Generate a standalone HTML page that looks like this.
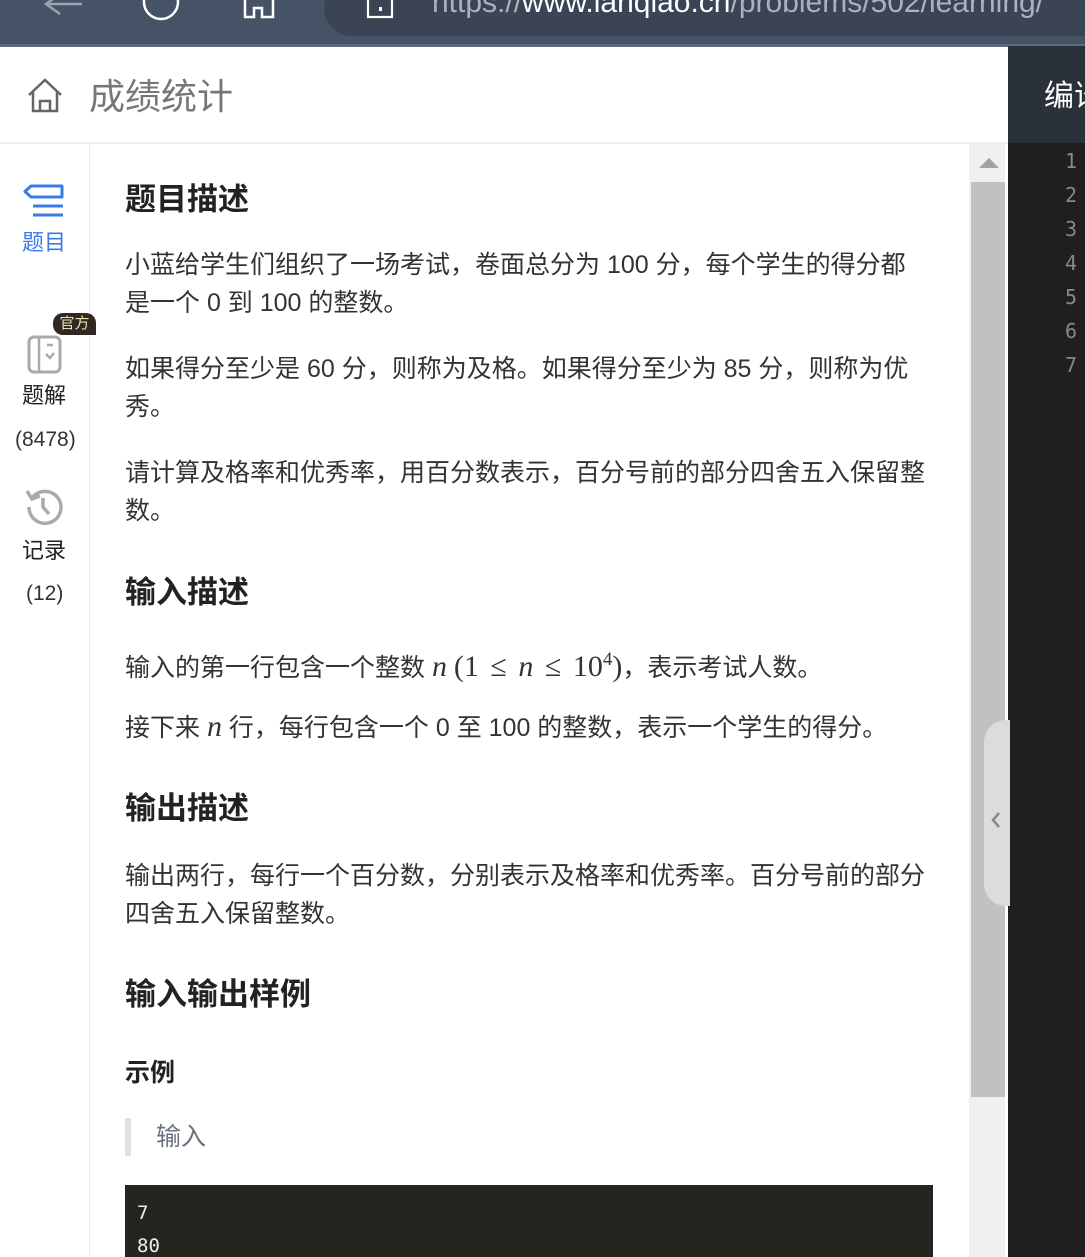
<!DOCTYPE html>
<html style="width:1085px;height:1257px;overflow:hidden"><head><meta charset="utf-8">
<style>
*{margin:0;padding:0;box-sizing:border-box}
body{width:1085px;height:1257px;overflow:hidden;background:#fff;position:relative;font-family:"Liberation Sans","Noto Sans CJK SC",sans-serif;color:#333}
.a{position:absolute;white-space:nowrap}
.p{position:absolute;left:125px;font-size:25px;line-height:38px;color:#333;white-space:nowrap}
.h{position:absolute;left:125px;font-size:31px;font-weight:bold;color:#222;line-height:40px}
.m{font-family:"Liberation Serif",serif;font-style:italic;font-size:30px}
.r{font-family:"Liberation Serif",serif;font-size:30px;word-spacing:4px}
</style></head><body>
<!-- browser bar -->
<div class="a" style="left:0;top:0;width:1085px;height:45px;background:#465366"></div>
<div class="a" style="left:324px;top:-20px;width:800px;height:56px;background:#3a4454;border-radius:28px"></div>
<div class="a" style="left:0;top:44px;width:1085px;height:3px;background:#5d6a7c"></div>
<div class="a" style="left:432px;top:-14px;font-size:30px;color:#aab2bd;line-height:34px">https://<span style="color:#fff">www.lanqiao.cn</span>/problems/502/learning/</div>
<svg class="a" style="left:40px;top:0" width="45" height="20"><path d="M42 4H8M20 -6L6 4L20 14" stroke="#9aa3ae" stroke-width="2.5" fill="none"/></svg>
<svg class="a" style="left:140px;top:0" width="40" height="22"><circle cx="21" cy="2" r="17" stroke="#fff" stroke-width="2.5" fill="none"/></svg>
<svg class="a" style="left:240px;top:0" width="40" height="22"><path d="M5 0V17H14V8H22V17H33V0" stroke="#fff" stroke-width="2.5" fill="none"/></svg>
<svg class="a" style="left:365px;top:0" width="30" height="22"><path d="M3 0V17H27V0" stroke="#fff" stroke-width="2.2" fill="none"/><rect x="14" y="7" width="3" height="4" fill="#fff"/></svg>
<!-- header -->
<div class="a" style="left:0;top:142px;width:1008px;height:2px;background:#eee"></div>
<svg class="a" style="left:26px;top:77px" width="38" height="38"><path d="M3 18L19 3L35 18M7 15V34H31V15M14 34V24H24V34" stroke="#666" stroke-width="2.5" fill="none"/></svg>
<div class="a" style="left:89px;top:74px;font-size:36px;color:#777;line-height:46px">成绩统计</div>
<!-- right editor -->
<div class="a" style="left:1008px;top:46px;width:77px;height:97px;background:#2a3138"></div>
<div class="a" style="left:1044px;top:78px;font-size:30px;color:#fff;line-height:38px">编译</div>
<div class="a" style="left:1008px;top:143px;width:77px;height:1114px;background:#1f1f1f"></div>
<div class="a" style="left:1055px;top:144px;font-family:'DejaVu Sans Mono',monospace;font-size:20px;color:#888;line-height:34px;text-align:right;width:22px;white-space:pre">1
2
3
4
5
6
7</div>
<!-- scrollbar -->
<div class="a" style="left:969px;top:144px;width:39px;height:1113px;background:#f0f0f0"></div>
<div class="a" style="left:1005px;top:144px;width:3px;height:1113px;background:#fff"></div>
<svg class="a" style="left:978px;top:157px" width="22" height="12"><path d="M1 11L11 1L21 11Z" fill="#a3a3a3"/></svg>
<div class="a" style="left:971px;top:182px;width:34px;height:915px;background:#c1c1c1"></div>
<div class="a" style="left:984px;top:720px;width:26px;height:186px;background:#dcdcdc;border-radius:22px 0 0 22px"></div>
<svg class="a" style="left:989px;top:810px" width="14" height="20"><path d="M10 3L4 10L10 17" stroke="#888" stroke-width="2.5" fill="none"/></svg>
<!-- sidebar -->
<div class="a" style="left:89px;top:144px;width:1px;height:1113px;background:#ececec"></div>
<svg class="a" style="left:22px;top:182px" width="46" height="36"><path d="M9 4H40V15H9L3 9.5Z" stroke="#3b7ae8" stroke-width="3" fill="none" stroke-linejoin="round"/><path d="M11 24H41M11 33H41" stroke="#3b7ae8" stroke-width="3"/></svg>
<div class="a" style="left:22px;top:229px;font-size:22px;color:#3b7ae8;line-height:28px">题目</div>
<div class="a" style="left:53px;top:313px;width:43px;height:22px;background:#2e2a22;border-radius:10px 10px 0 10px;color:#f0dfb0;font-size:15px;line-height:22px;text-align:center">官方</div>
<svg class="a" style="left:27px;top:335px" width="36" height="40"><rect x="2" y="2" width="31" height="35" rx="5" stroke="#aaa" stroke-width="3" fill="none"/><path d="M12 2V37M20 10H26M19 19L23 23L27 18" stroke="#aaa" stroke-width="2.5" fill="none"/></svg>
<div class="a" style="left:22px;top:382px;font-size:22px;color:#222;line-height:28px">题解</div>
<div class="a" style="left:15px;top:426px;font-size:21px;color:#333;line-height:28px">(8478)</div>
<svg class="a" style="left:24px;top:486px" width="42" height="42"><path d="M8 12A16 16 0 1 1 5 21" stroke="#aaa" stroke-width="3.5" fill="none"/><path d="M3 5L8 13L16 10" stroke="#aaa" stroke-width="3.5" fill="none"/><path d="M19 12V21L25 28" stroke="#aaa" stroke-width="3.5" fill="none"/></svg>
<div class="a" style="left:22px;top:537px;font-size:22px;color:#222;line-height:28px">记录</div>
<div class="a" style="left:26px;top:580px;font-size:21px;color:#333;line-height:28px">(12)</div>
<!-- content -->
<div class="h" style="top:180px">题目描述</div>
<div class="p" style="top:246px">小蓝给学生们组织了一场考试，卷面总分为 100 分，每个学生的得分都<br>是一个 0 到 100 的整数。</div>
<div class="p" style="top:350px">如果得分至少是 60 分，则称为及格。如果得分至少为 85 分，则称为优<br>秀。</div>
<div class="p" style="top:454px">请计算及格率和优秀率，用百分数表示，百分号前的部分四舍五入保留整<br>数。</div>
<div class="h" style="top:573px">输入描述</div>
<div class="p" style="top:641px">输入的第一行包含一个整数 <span class="m">n</span> <span class="r">(1 ≤ <i>n</i> ≤ 10<sup style="font-size:19px">4</sup>)</span>，表示考试人数。</div>
<div class="p" style="top:708px">接下来 <span class="m">n</span> 行，每行包含一个 0 至 100 的整数，表示一个学生的得分。</div>
<div class="h" style="top:789px">输出描述</div>
<div class="p" style="top:857px">输出两行，每行一个百分数，分别表示及格率和优秀率。百分号前的部分<br>四舍五入保留整数。</div>
<div class="h" style="top:975px">输入输出样例</div>
<div class="a" style="left:125px;top:1058px;font-size:25px;font-weight:bold;color:#222;line-height:30px">示例</div>
<div class="a" style="left:125px;top:1118px;width:6px;height:38px;background:#dfe2e5"></div>
<div class="a" style="left:156px;top:1121px;font-size:25px;color:#6a737d;line-height:32px">输入</div>
<div class="a" style="left:125px;top:1185px;width:808px;height:72px;background:#252520"></div>
<div class="a" style="left:137px;top:1197px;font-family:'DejaVu Sans Mono',monospace;font-size:19px;color:#eee;line-height:33px;white-space:pre">7
80</div>
</body></html>
